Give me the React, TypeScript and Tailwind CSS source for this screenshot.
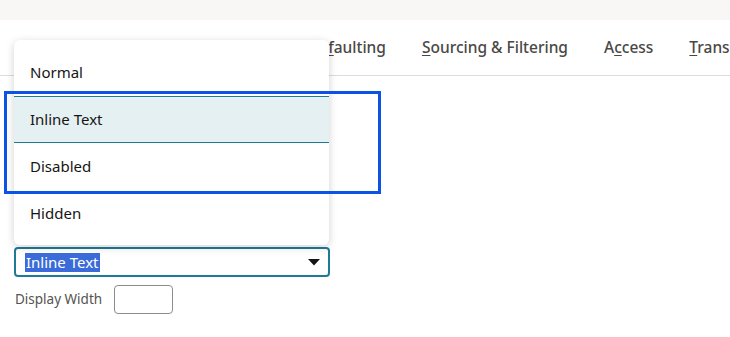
import React from 'react'

const tabs = [
  { label: 'Display', key: 'D' },
  { label: 'Defaulting', key: 'f' },
  { label: 'Sourcing & Filtering', key: 'S' },
  { label: 'Access', key: 'c' },
  { label: 'Translation', key: 'T' },
]

function TabLabel({ label, accessKey }: { label: string; accessKey: string }) {
  const i = label.indexOf(accessKey)
  if (i < 0) return <>{label}</>
  return (
    <>
      {label.slice(0, i)}
      <span className="underline underline-offset-2">{label[i]}</span>
      {label.slice(i + 1)}
    </>
  )
}

const options = ['Normal', 'Inline Text', 'Disabled', 'Hidden']

export default function App() {
  const selected = 'Inline Text'

  return (
    <div
      className="relative w-[730px] h-[337px] overflow-hidden bg-white text-[#161513]"
      style={{ fontFamily: '"Noto Sans", "Open Sans", sans-serif' }}
    >
      {/* top strip */}
      <div className="h-[20px] bg-[#f8f7f5]" />

      {/* tabs */}
      <div className="h-[56px] border-b border-[#dedcda] flex items-center pl-[218px] gap-[36px] whitespace-nowrap text-[15.5px] text-[#4a4846] font-medium">
        {tabs.map(t => (
          <span key={t.label}>
            <TabLabel label={t.label} accessKey={t.key} />
          </span>
        ))}
      </div>

      {/* form */}
      <div className="pl-[14px] pt-[171px] flex flex-col">
        <div className="relative w-[316px] h-[30px] border-2 border-[#1f7a95] rounded-[4px] flex items-center pl-[9px] pr-[8px]">
          <span className="bg-[#3a6bd8] text-white text-[15px] leading-[19px] px-[1px]">{selected}</span>
          <svg className="ml-auto" width="12" height="7" viewBox="0 0 12 7">
            <path d="M0 0 L12 0 L6 6.5 Z" fill="#161513" />
          </svg>
        </div>
        <div className="flex items-center mt-[8px]">
          <span className="text-[13.5px] text-[#555350] w-[100px] pl-[1px]">Display Width</span>
          <div className="w-[59px] h-[29px] border border-[#8e8c8a] rounded-[4px] bg-white" />
        </div>
      </div>

      {/* open listbox */}
      <div className="absolute left-[14px] top-[40px] w-[315px] h-[205px] bg-white rounded-[6px] shadow-[0_2px_8px_rgba(0,0,0,0.18)] pt-[9px]">
        {options.map(o => (
          <div
            key={o}
            className={
              o === selected
                ? 'h-[47px] flex items-center pl-[16px] text-[15px] bg-[#e5f0f2] border-y border-[#1f7a95]'
                : 'h-[47px] flex items-center pl-[16px] text-[15px]'
            }
          >
            {o}
          </div>
        ))}
      </div>

      {/* annotation box */}
      <div className="absolute left-[4px] top-[91px] w-[377px] h-[103px] border-[3px] border-[#0b53e6]" />
    </div>
  )
}
